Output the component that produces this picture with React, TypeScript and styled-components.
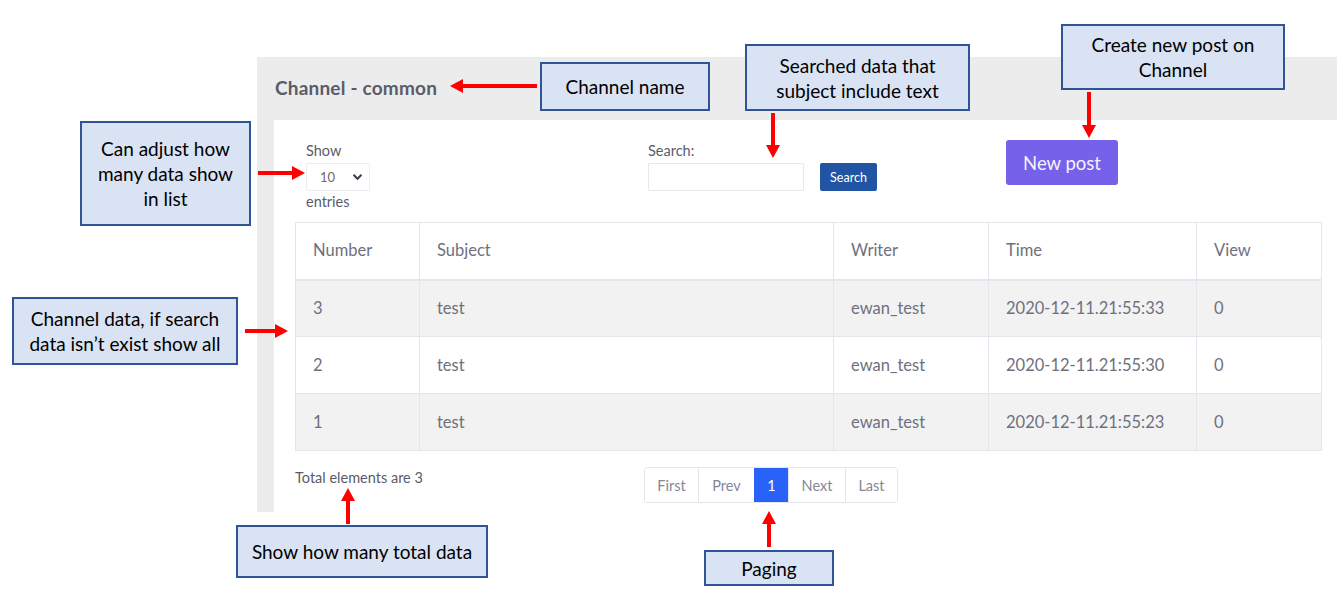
import React from "react";
import styled, { createGlobalStyle } from "styled-components";

const Global = createGlobalStyle`
  html, body { margin: 0; padding: 0; background: #ffffff; }
  body { font-family: Lato, "Open Sans", sans-serif; }
  * { box-sizing: border-box; }
`;

const Page = styled.div`
  position: relative;
  width: 1343px;
  height: 601px;
  overflow: hidden;
  background: #ffffff;
  padding-top: 57px;
`;

const Panel = styled.section`
  margin-left: 257px;
  width: 1080px;
  height: 455px;
  display: flex;
  flex-direction: column;
`;

const PanelHeader = styled.header`
  height: 63px;
  background: #ececec;
  display: flex;
  align-items: center;
  padding-left: 18px;
  padding-bottom: 3px;
`;

const Title = styled.h1`
  margin: 0;
  font-family: Lato, "Open Sans", sans-serif;
  font-size: 19px;
  font-weight: 700;
  color: #5a5c69;
  letter-spacing: 0.2px;
`;

const PanelBody = styled.div`
  flex: 1;
  background: #ffffff;
  border-left: 17px solid #ececec;
  padding: 20px 16px 0 21px;
`;

const Controls = styled.div`
  display: flex;
  align-items: flex-start;
  padding-left: 11px;
  height: 82px;
`;

const ShowBlock = styled.div`
  width: 342px;
  display: flex;
  flex-direction: column;
  padding-top: 1px;
`;

const Label = styled.span<{ $gap?: number }>`
  font-size: 14.5px;
  line-height: 20px;
  color: #5a5c69;
  height: 22px;
  margin-top: ${(p) => p.$gap ?? 0}px;
`;

const SelectBox = styled.div`
  width: 64px;
  height: 28px;
  border: 1px solid #ebedf2;
  border-radius: 2px;
  display: flex;
  align-items: center;
  justify-content: space-between;
  padding: 0 6px 0 13px;
  font-size: 13px;
  color: #6e6a66;
`;

const SearchBlock = styled.div`
  display: flex;
  flex-direction: column;
  width: 155px;
  padding-top: 1px;
`;

const SearchInput = styled.div`
  width: 156px;
  height: 28px;
  border: 1px solid #e6e8ee;
  border-radius: 2px;
  background: #fff;
`;

const SearchButton = styled.button`
  margin-left: 17px;
  margin-top: 23px;
  width: 57px;
  height: 28px;
  border: none;
  border-radius: 2px;
  background: #2155a4;
  color: #ffffff;
  font-family: Lato, "Open Sans", sans-serif;
  font-size: 12.5px;
  padding: 0;
`;

const NewPostButton = styled.button`
  margin-left: 129px;
  margin-top: 0;
  width: 112px;
  height: 45px;
  border: none;
  border-radius: 3px;
  background: #7561ea;
  color: #f4f2ff;
  font-family: Lato, "Open Sans", sans-serif;
  font-size: 18.5px;
  padding: 0;
`;

const Table = styled.table`
  border-collapse: collapse;
  width: 1026px;
  table-layout: fixed;
  font-size: 16.5px;
  color: #6e707e;
`;

const Th = styled.th<{ $w: number }>`
  width: ${(p) => p.$w}px;
  height: 57px;
  text-align: left;
  font-weight: 400;
  padding: 0 0 1px 17px;
  border: 1px solid #e3e6ec;
  border-bottom: 2px solid #e3e6ec;
  background: #ffffff;
`;

const Tr = styled.tr<{ $striped: boolean }>`
  background: ${(p) => (p.$striped ? "#f2f2f2" : "#ffffff")};
`;

const Td = styled.td`
  height: 57px;
  padding: 0 0 0 17px;
  border: 1px solid #e3e6ec;
`;

const Footer = styled.div`
  display: flex;
  align-items: flex-start;
  margin-top: 16px;
`;

const Total = styled.div`
  width: 349px;
  font-size: 14.5px;
  color: #5a5c69;
  padding-top: 2px;
`;

const Pager = styled.div`
  display: flex;
  height: 36px;
  border: 1px solid #e3e6ec;
  border-radius: 3px;
  overflow: hidden;
`;

const PageItem = styled.div<{ $w: number; $active?: boolean }>`
  width: ${(p) => p.$w}px;
  display: flex;
  align-items: center;
  justify-content: center;
  font-size: 14.5px;
  color: ${(p) => (p.$active ? "#ffffff" : "#858796")};
  background: ${(p) => (p.$active ? "#2962f6" : "#ffffff")};
  border-left: 1px solid ${(p) => (p.$active ? "#2962f6" : "#e3e6ec")};
  &:first-child { border-left: none; }
`;

/* Annotations (overlay on the canvas) */
const Callout = styled.div<{ $x: number; $y: number; $w: number; $h: number }>`
  position: absolute;
  left: ${(p) => p.$x}px;
  top: ${(p) => p.$y}px;
  width: ${(p) => p.$w}px;
  height: ${(p) => p.$h}px;
  background: #dae3f3;
  border: 2px solid #2f5597;
  display: flex;
  align-items: center;
  justify-content: center;
  text-align: center;
  font-family: Lato, "Open Sans", sans-serif;
  font-size: 19px;
  line-height: 25px;
  color: #000000;
  padding: 0 4px;
  white-space: nowrap;
`;

const ArrowSvg = styled.svg<{ $x: number; $y: number }>`
  position: absolute;
  left: ${(p) => p.$x}px;
  top: ${(p) => p.$y}px;
  overflow: visible;
`;

type Dir = "left" | "right" | "up" | "down";

function Arrow({ x1, y1, x2, y2 }: { x1: number; y1: number; x2: number; y2: number }) {
  const dir: Dir =
    y1 === y2 ? (x2 < x1 ? "left" : "right") : y2 < y1 ? "up" : "down";
  const minX = Math.min(x1, x2) - 8;
  const minY = Math.min(y1, y2) - 8;
  const w = Math.abs(x2 - x1) + 16;
  const h = Math.abs(y2 - y1) + 16;
  const tx = x2 - minX;
  const ty = y2 - minY;
  const sx = x1 - minX;
  const sy = y1 - minY;
  const head = 13;
  const half = 7;
  let line = "";
  let tri = "";
  if (dir === "left") {
    line = `M${sx} ${sy}L${tx + head} ${ty}`;
    tri = `${tx},${ty} ${tx + head},${ty - half} ${tx + head},${ty + half}`;
  } else if (dir === "right") {
    line = `M${sx} ${sy}L${tx - head} ${ty}`;
    tri = `${tx},${ty} ${tx - head},${ty - half} ${tx - head},${ty + half}`;
  } else if (dir === "up") {
    line = `M${sx} ${sy}L${tx} ${ty + head}`;
    tri = `${tx},${ty} ${tx - half},${ty + head} ${tx + half},${ty + head}`;
  } else {
    line = `M${sx} ${sy}L${tx} ${ty - head}`;
    tri = `${tx},${ty} ${tx - half},${ty - head} ${tx + half},${ty - head}`;
  }
  return (
    <ArrowSvg $x={minX} $y={minY} width={w} height={h} viewBox={`0 0 ${w} ${h}`}>
      <path d={line} stroke="#ff0000" strokeWidth={4} fill="none" />
      <polygon points={tri} fill="#ff0000" />
    </ArrowSvg>
  );
}

const Chevron = () => (
  <svg width="11" height="8" viewBox="0 0 11 8">
    <path d="M1.5 1.8 L5.5 5.8 L9.5 1.8" stroke="#3d3f4a" strokeWidth="2" fill="none" />
  </svg>
);

const rows = [
  { n: 3, s: "test", w: "ewan_test", t: "2020-12-11.21:55:33", v: 0 },
  { n: 2, s: "test", w: "ewan_test", t: "2020-12-11.21:55:30", v: 0 },
  { n: 1, s: "test", w: "ewan_test", t: "2020-12-11.21:55:23", v: 0 },
];

export default function App() {
  return (
    <Page>
      <Global />
      <Panel>
        <PanelHeader>
          <Title>Channel - common</Title>
        </PanelHeader>
        <PanelBody>
          <Controls>
            <ShowBlock>
              <Label>Show</Label>
              <SelectBox>
                <span>10</span>
                <Chevron />
              </SelectBox>
              <Label $gap={1}>entries</Label>
            </ShowBlock>
            <SearchBlock>
              <Label>Search:</Label>
              <SearchInput />
            </SearchBlock>
            <SearchButton>Search</SearchButton>
            <NewPostButton>New post</NewPostButton>
          </Controls>
          <Table>
            <thead>
              <tr>
                <Th $w={124}>Number</Th>
                <Th $w={414}>Subject</Th>
                <Th $w={155}>Writer</Th>
                <Th $w={208}>Time</Th>
                <Th $w={125}>View</Th>
              </tr>
            </thead>
            <tbody>
              {rows.map((r, i) => (
                <Tr key={r.n} $striped={i % 2 === 0}>
                  <Td>{r.n}</Td>
                  <Td>{r.s}</Td>
                  <Td>{r.w}</Td>
                  <Td>{r.t}</Td>
                  <Td>{r.v}</Td>
                </Tr>
              ))}
            </tbody>
          </Table>
          <Footer>
            <Total>Total elements are 3</Total>
            <Pager>
              <PageItem $w={53}>First</PageItem>
              <PageItem $w={56}>Prev</PageItem>
              <PageItem $w={34} $active>1</PageItem>
              <PageItem $w={57}>Next</PageItem>
              <PageItem $w={52}>Last</PageItem>
            </Pager>
          </Footer>
        </PanelBody>
      </Panel>

      <Callout $x={540} $y={62} $w={170} $h={49}>Channel name</Callout>
      <Arrow x1={537} y1={86} x2={450} y2={86} />

      <Callout $x={745} $y={44} $w={225} $h={67}>
        Searched data that<br />subject include text
      </Callout>
      <Arrow x1={773} y1={113} x2={773} y2={158} />

      <Callout $x={1061} $y={24} $w={224} $h={66}>
        Create new post on<br />Channel
      </Callout>
      <Arrow x1={1089} y1={92} x2={1089} y2={138} />

      <Callout $x={80} $y={121} $w={171} $h={105}>
        Can adjust how<br />many data show<br />in list
      </Callout>
      <Arrow x1={258} y1={173} x2={305} y2={173} />

      <Callout $x={12} $y={297} $w={226} $h={68}>
        Channel data, if search<br />data isn’t exist show all
      </Callout>
      <Arrow x1={245} y1={331} x2={288} y2={331} />

      <Callout $x={236} $y={525} $w={252} $h={53}>Show how many total data</Callout>
      <Arrow x1={348} y1={524} x2={348} y2={488} />

      <Callout $x={704} $y={550} $w={130} $h={36}>Paging</Callout>
      <Arrow x1={769} y1={547} x2={769} y2={511} />
    </Page>
  );
}
